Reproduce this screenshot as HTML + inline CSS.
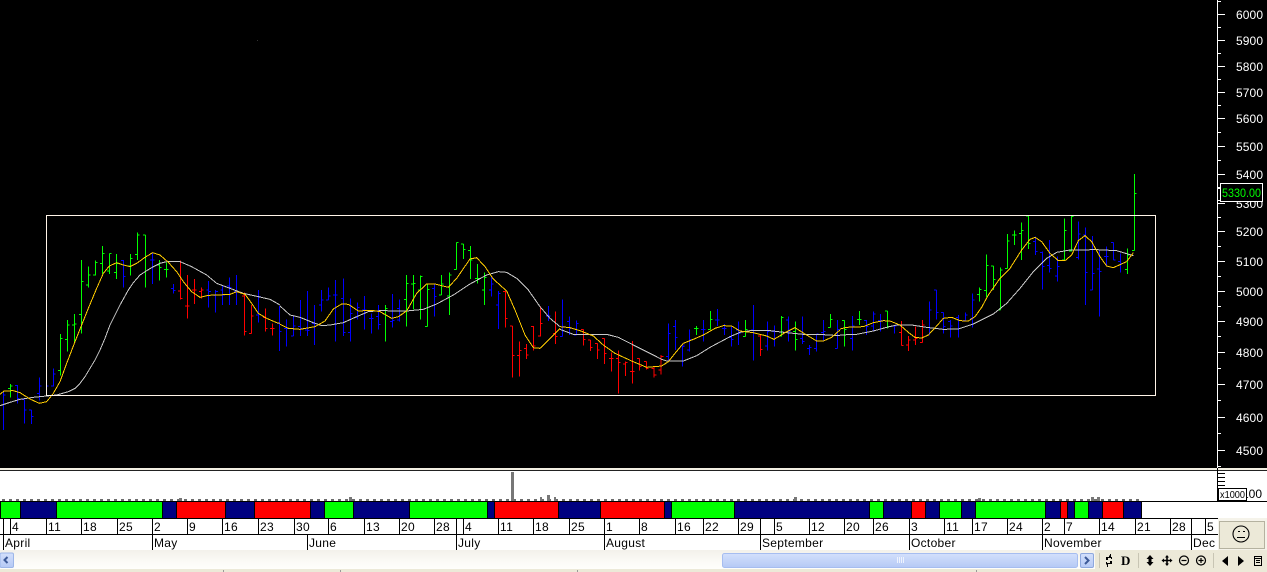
<!DOCTYPE html>
<html>
<head>
<meta charset="utf-8">
<style>
html,body{margin:0;padding:0;background:#000;width:1267px;height:572px;overflow:hidden}
svg{display:block;position:absolute;left:0;top:0}
.ax{font:12px "Liberation Sans",sans-serif;fill:#fff;letter-spacing:.1px}
.d{font:12px "Liberation Sans",sans-serif;fill:#000;letter-spacing:.3px}
</style>
</head>
<body>
<svg width="1267" height="572" viewBox="0 0 1267 572" xmlns="http://www.w3.org/2000/svg">
<defs>
<linearGradient id="tr" x1="0" y1="0" x2="0" y2="1"><stop offset="0" stop-color="#f3f1ea"/><stop offset=".6" stop-color="#fbfaf6"/><stop offset="1" stop-color="#fefefb"/></linearGradient>
<linearGradient id="th" x1="0" y1="0" x2="0" y2="1"><stop offset="0" stop-color="#d3e0fc"/><stop offset="1" stop-color="#b5c9f5"/></linearGradient>
</defs>
<rect width="1267" height="572" fill="#000"/>
<rect x="257" y="40" width="1" height="1" fill="#333"/>

<!-- bars -->
<g fill="none" stroke-width="3" shape-rendering="crispEdges">
<g transform="translate(0,210) scale(.33333)">
<path stroke="#00f" d="M10 545V660M10 585h-7M10 555h7M52 525V580M52 527h-7M52 565h7M73 568V640M73 568h-7M73 600h7M94 600V642M94 600h-7M94 620h7M118 502V572M118 550h-7M118 528h7M139 528V560M139 528h7M160 475V530M160 528h-7M160 492h7M370 150V233M370 152h-7M370 200h7M457 128V222M457 150h-7M457 150h7M520 222V250M520 235h-7M520 242h7M626 213V293M626 240h-7M626 245h7M647 240V308M647 257h-7M647 245h7M668 225V285M668 240h-7M668 255h7M688 202V285M688 228h-7M688 232h7M709 195V285M709 245h-7M709 245h7M775 240V338M775 315h-7M775 260h7M838 288V423M838 340h-7M838 365h7"/>
<path stroke="#0f0" d="M31 522V563M31 535h-7M31 528h7M181 372V497M181 482h-7M181 385h7M202 330V425M202 388h-7M202 345h7M223 312V398M223 345h-7M223 342h7M244 150V370M244 313h-7M244 215h7M265 170V232M265 225h-7M265 195h7M286 152V197M286 195h-7M286 157h7M307 108V192M307 160h-7M307 130h7M328 130V192M328 183h-7M328 130h7M349 132V207M349 187h-7M349 160h7M391 132V197M391 168h-7M391 145h7M412 68V150M412 133h-7M412 75h7M436 75V233M436 75h-7M478 150V212M478 165h-7M478 172h7M499 158V202M499 178h-7M499 178h7"/>
<path stroke="#f00" d="M541 152V268M541 243h-7M541 265h7M562 195V326M562 288h-7M562 288h7M583 207V282M583 240h-7M583 240h7M604 232V265M604 245h-7M604 240h7M733 247V377M733 258h-7M733 365h7M754 285V370M754 370h-7M754 318h7M796 295V365M796 322h-7M796 355h7M817 340V377M817 355h-7M817 355h7"/>
</g>
<g transform="translate(280,210) scale(.33333)">
<path stroke="#00f" d="M19 328V410M19 355h-7M19 355h7M40 318V378M40 378h-7M40 348h7M61 270V378M61 350h-7M61 355h7M82 243V378M82 360h-7M82 362h7M103 285V405M103 340h-7M103 340h7M124 240V305M124 285h-7M124 270h7M145 232V270M145 270h-7M145 258h7M166 210V395M166 255h-7M166 255h7M190 205V378M190 265h-7M190 368h7M211 265V395M211 368h-7M211 310h7M232 278V328M232 322h-7M232 292h7M253 258V358M253 300h-7M253 300h7M274 310V370M274 325h-7M274 325h7M295 285V358M295 320h-7M295 343h7M337 252V352M337 335h-7M337 332h7M358 268V335M358 295h-7M358 330h-7M463 220V320M463 235h-7M463 260h7M634 200V260M634 240h-7M634 222h7M655 243V357M655 285h-7M655 250h7M805 288V333M805 318h-7M805 318h7"/>
<path stroke="#0f0" d="M316 285V395M316 312h-7M316 295h7M379 195V350M379 268h-7M379 220h7M400 195V298M400 222h-7M400 220h7M421 197V328M421 240h-7M421 200h7M442 222V350M442 350h-7M442 238h7M484 195V255M484 255h-7M484 222h7M508 187V315M508 258h-7M508 195h7M529 97V178M529 178h-7M529 98h7M550 102V147M550 102h-7M550 118h7M571 108V207M571 122h-7M571 150h7M592 162V220M592 205h-7M592 205h7M613 187V285M613 240h-7M613 202h7"/>
<path stroke="#f00" d="M676 243V353M676 245h-7M676 325h7M697 348V503M697 348h-7M697 436h7M718 395V500M718 436h-7M718 422h7M739 402V447M739 415h-7M739 435h7M760 348V422M760 350h-7M760 408h7M781 290V380M781 378h-7M781 340h7M826 305V402M826 370h-7M826 380h7"/>
</g>
<g transform="translate(560,260) scale(.33333)">
<path stroke="#00f" d="M7 118V230M7 230h-7M7 200h7M28 170V225M28 185h-7M28 205h7M49 182V225M49 225h-7M49 190h7M325 190V305M325 290h-7M325 220h7M346 180V270M346 200h-7M346 232h7M367 258V320M367 260h7M367 255h7M388 208V275M388 270h-7M388 238h7M430 180V245M430 208h-7M430 208h7M472 147V198M472 180h-7M472 180h7M493 192V225M493 205h-7M493 205h7M514 200V260M514 232h-7M514 238h7M535 185V255M535 210h-7M535 220h7M580 135V302M580 210h-7M580 212h7M622 185V272M622 258h-7M622 215h7M643 197V260M643 215h-7M643 215h7M685 170V245M685 180h-7M685 215h7M727 170V252M727 235h-7M727 245h7M748 255V285M748 265h-7M748 262h7M769 222V275M769 265h-7M769 222h7M790 180V243M790 218h-7M790 215h7M832 180V265M832 265h-7M832 208h7"/>
<path stroke="#0f0" d="M409 198V225M409 205h-7M409 205h7M451 153V208M451 208h-7M451 178h7M556 180V230M556 230h-7M556 208h7M664 168V230M664 228h-7M664 172h7M706 185V272M706 215h-7M706 238h7M811 162V203M811 203h-7M811 178h7"/>
<path stroke="#f00" d="M70 208V257M70 208h-7M70 238h7M91 240V273M91 240h-7M91 262h7M112 250V297M112 250h-7M112 270h7M133 235V312M133 235h-7M133 280h7M154 278V335M154 295h-7M154 295h7M175 272V400M175 295h-7M175 308h7M196 305V348M196 312h-7M196 308h7M217 243V370M217 335h-7M217 335h7M238 295V332M238 295h-7M238 320h7M259 304V328M259 304h-7M259 325h7M282 318V353M282 325h-7M282 345h7M303 285V343M303 330h-7M303 290h7M601 225V288M601 228h-7M601 268h7"/>
</g>
<g transform="translate(840,200) scale(.33333)">
<path stroke="#00f" d="M37 348V452M37 415h-7M37 378h7M79 360V405M79 362h-7M79 380h7M100 335V395M100 378h-7M100 342h7M121 342V395M121 362h-7M121 362h7M163 375V400M163 378h-7M163 378h7M268 305V405M268 405h-7M268 330h7M289 270V358M289 270h-7M289 338h7M310 337V400M310 338h-7M310 380h7M331 360V412M331 365h-7M331 378h7M355 345V412M355 352h-7M355 385h7M376 337V365M376 362h-7M376 345h7M397 280V383M397 355h-7M397 300h7M586 110V165M586 125h-7M586 155h7M607 155V268M607 157h-7M607 200h7M628 120V218M628 197h-7M628 205h7M652 170V245M652 228h-7M652 200h7M715 65V178M715 172h-7M715 102h7M736 82V315M736 105h-7M736 217h7M757 108V270M757 270h-7M757 220h7M778 150V350M778 207h-7M778 215h7M799 140V198M799 170h-7M799 170h7M820 127V180M820 127h-7M820 180h7M841 160V218M841 185h-7M841 190h7"/>
<path stroke="#0f0" d="M13 362V440M13 362h-7M13 388h7M58 333V375M58 358h-7M58 358h7M142 333V385M142 333h-7M142 380h7M418 262V305M418 283h-7M418 268h7M439 163V292M439 272h-7M439 197h7M460 198V270M460 198h-7M460 238h7M481 202V330M481 330h-7M481 210h7M502 102V205M502 205h-7M502 123h7M523 92V135M523 105h-7M523 105h7M544 67V180M544 100h-7M544 92h7M565 48V147M565 48h-7M565 130h7M673 55V180M673 180h-7M673 92h7M694 48V155M694 153h-7M694 50h7M862 145V222M862 208h-7M862 165h7"/>
<path stroke="#f00" d="M184 363V437M184 397h-7M184 437h7M205 408V453M205 435h-7M205 420h7M226 380V435M226 420h-7M226 415h7M247 360V428M247 428h-7M247 375h7"/>
</g>
<g transform="translate(1100,160) scale(.33333)">
<path stroke="#0f0" d="M103 42V272M103 272h-7M103 100h7"/>
</g>
</g>

<!-- moving averages -->
<g fill="none" stroke-width="3" stroke-linejoin="round" shape-rendering="crispEdges">
<g transform="translate(0,210) scale(.33333)">
<polyline stroke="#c8c8c8" points="0,587 30,577 60,568 100,562 140,558 170,555 205,545 225,535 240,520 255,500 270,475 285,450 300,420 315,385 330,345 345,315 360,285 385,240 400,218 420,195 440,182 460,170 480,160 500,155 540,155 575,170 620,195 650,220 690,235 730,250 775,260 810,268 840,285"/>
<polyline stroke="#ffcc00" points="0,553 12,543 40,542 60,548 90,567 118,580 140,575 160,550 180,515 200,460 225,395 245,345 265,295 290,235 310,190 328,168 350,158 370,165 390,170 410,160 435,142 458,128 480,135 505,157 530,185 550,215 575,245 600,262 625,256 655,255 690,253 710,245 735,253 755,280 775,310 800,325 830,338 840,340"/>
</g>
<g transform="translate(280,210) scale(.33333)">
<polyline stroke="#c8c8c8" points="0,288 30,315 60,322 100,338 125,347 150,345 190,338 230,320 265,305 300,302 380,303 430,298 470,282 520,255 570,222 620,195 655,185 680,187 710,205 745,240 780,290 810,325 840,350"/>
<polyline stroke="#ffcc00" points="0,343 25,355 60,358 105,350 135,333 160,297 185,282 205,283 235,303 275,301 300,305 335,325 355,320 380,303 410,250 440,222 465,222 505,232 530,205 570,147 590,143 615,170 640,207 680,243 705,300 735,375 760,413 780,415 805,390 825,370 840,355"/>
</g>
<g transform="translate(560,260) scale(.33333)">
<polyline stroke="#c8c8c8" points="0,208 40,223 140,223 175,232 220,255 270,280 305,298 320,303 370,303 410,287 450,262 510,230 540,217 570,212 630,212 680,218 730,223 790,224 840,227"/>
<polyline stroke="#ffcc00" points="0,200 30,203 60,212 100,228 130,255 165,280 215,303 260,322 305,318 325,305 345,280 370,250 400,238 430,225 465,205 490,197 515,198 540,213 580,218 620,228 642,238 675,218 705,203 735,222 770,243 790,243 815,232 840,210"/>
</g>
<g transform="translate(840,200) scale(.33333)">
<polyline stroke="#c8c8c8" points="0,405 50,403 100,393 140,382 170,375 215,375 260,382 310,388 355,387 400,372 460,342 500,310 540,265 580,215 620,175 650,157 690,150 770,149 830,152 880,167"/>
<polyline stroke="#ffcc00" points="0,387 20,382 70,380 100,368 130,362 150,363 180,375 205,397 225,412 245,414 265,405 290,378 310,355 335,352 360,362 385,363 405,350 425,322 445,285 480,235 510,205 545,150 570,118 585,112 605,125 630,160 655,182 675,182 695,165 715,122 735,107 755,125 780,170 800,198 820,203 860,185 880,158"/>
</g>
</g>

<!-- pattern box -->
<rect x="46.5" y="215.5" width="1109" height="180" fill="none" stroke="#fff4e8" stroke-width="1" shape-rendering="crispEdges"/>

<!-- price axis -->
<g shape-rendering="crispEdges" stroke="#fff" fill="none">
<path d="M1217.5 0V468"/>
<path d="M1217 14.5h8M1217 40.5h8M1217 66.5h8M1217 92.5h8M1217 118.5h8M1217 146.5h8M1217 174.5h8M1217 203.5h8M1217 231.5h8M1217 261.5h8M1217 291.5h8M1217 321.5h8M1217 352.5h8M1217 384.5h8M1217 417.5h8M1217 450.5h8"/>
<path d="M1217 1.5h4M1217 27.5h4M1217 53.5h4M1217 79.5h4M1217 105.5h4M1217 132.5h4M1217 160.5h4M1217 188.5h4M1217 217.5h4M1217 246.5h4M1217 276.5h4M1217 306.5h4M1217 336.5h4M1217 368.5h4M1217 400.5h4M1217 433.5h4M1217 466.5h4"/>
</g>
<g class="ax">
<text x="1236" y="19">6000</text><text x="1236" y="45">5900</text><text x="1236" y="71">5800</text><text x="1236" y="97">5700</text><text x="1236" y="123">5600</text><text x="1236" y="151">5500</text><text x="1236" y="179">5400</text><text x="1236" y="208">5300</text><text x="1236" y="236">5200</text><text x="1236" y="266">5100</text><text x="1236" y="296">5000</text><text x="1236" y="326">4900</text><text x="1236" y="357">4800</text><text x="1236" y="389">4700</text><text x="1236" y="422">4600</text><text x="1236" y="455">4500</text>
</g>
<rect x="1220.5" y="183.5" width="42" height="18" fill="#000" stroke="#fff" shape-rendering="crispEdges"/>
<text x="1222" y="197" textLength="39" lengthAdjust="spacingAndGlyphs" style="font:12px 'Liberation Sans',sans-serif;fill:#0f0">5330.00</text>
<path d="M1217 187.5h3M1217 200.5h3" stroke="#fff" shape-rendering="crispEdges"/>

<!-- lower panels -->
<rect x="0" y="468" width="1267" height="3" fill="#f2efe2"/>
<rect x="0" y="470" width="1267" height="1" fill="#222"/>
<rect x="0" y="471" width="1267" height="30" fill="#fff"/>
<g shape-rendering="crispEdges">
<path d="M2 500h1139" stroke="#6e6e6e" stroke-width="2" stroke-dasharray="3 4"/>
<g fill="#777"><rect x="511" y="472" width="3" height="29"/><rect x="547" y="495" width="3" height="6"/><rect x="540" y="497" width="2" height="4"/><rect x="554" y="497" width="2" height="4"/><rect x="179" y="498" width="3" height="3"/><rect x="349" y="497" width="3" height="4"/><rect x="794" y="497" width="3" height="4"/><rect x="978" y="498" width="3" height="3"/><rect x="1091" y="497" width="3" height="4"/><rect x="1097" y="497" width="3" height="4"/></g>
<path d="M1217.5 468V501M1217 473.5h8M1217 477.5h8M1217 481.5h8M1217 485.5h8" stroke="#000" fill="none"/>
</g>
<text x="1242" y="498" style="font:12px 'Liberation Sans',sans-serif;fill:#000">100</text>
<rect x="1218.5" y="488.5" width="28" height="12" fill="#fff" stroke="#000" shape-rendering="crispEdges"/>
<text x="1220" y="498" textLength="25" lengthAdjust="spacingAndGlyphs" style="font:10.5px 'Liberation Sans',sans-serif;fill:#000">x1000</text>

<rect x="0" y="501" width="1267" height="1" fill="#000"/>
<rect x="0" y="502" width="1267" height="16" fill="#fff"/>
<g shape-rendering="crispEdges">
<rect x="0" y="502" width="1142" height="16" fill="#000"/>
<rect x="1" y="502" width="19" height="16" fill="#0f0"/><rect x="21" y="502" width="35" height="16" fill="#000080"/><rect x="57" y="502" width="105" height="16" fill="#0f0"/><rect x="163" y="502" width="13" height="16" fill="#000080"/><rect x="177" y="502" width="48" height="16" fill="#f00"/><rect x="226" y="502" width="28" height="16" fill="#000080"/><rect x="255" y="502" width="55" height="16" fill="#f00"/><rect x="311" y="502" width="13" height="16" fill="#000080"/><rect x="325" y="502" width="28" height="16" fill="#0f0"/><rect x="354" y="502" width="55" height="16" fill="#000080"/><rect x="410" y="502" width="77" height="16" fill="#0f0"/><rect x="488" y="502" width="6" height="16" fill="#000080"/><rect x="495" y="502" width="63" height="16" fill="#f00"/><rect x="559" y="502" width="41" height="16" fill="#000080"/><rect x="601" y="502" width="63" height="16" fill="#f00"/><rect x="665" y="502" width="6" height="16" fill="#000080"/><rect x="672" y="502" width="62" height="16" fill="#0f0"/><rect x="735" y="502" width="134" height="16" fill="#000080"/><rect x="870" y="502" width="13" height="16" fill="#0f0"/><rect x="884" y="502" width="27" height="16" fill="#000080"/><rect x="912" y="502" width="13" height="16" fill="#f00"/><rect x="926" y="502" width="13" height="16" fill="#000080"/><rect x="940" y="502" width="21" height="16" fill="#0f0"/><rect x="962" y="502" width="13" height="16" fill="#000080"/><rect x="976" y="502" width="69" height="16" fill="#0f0"/><rect x="1046" y="502" width="14" height="16" fill="#000080"/><rect x="1061" y="502" width="6" height="16" fill="#f00"/><rect x="1068" y="502" width="6" height="16" fill="#000080"/><rect x="1075" y="502" width="13" height="16" fill="#0f0"/><rect x="1089" y="502" width="13" height="16" fill="#000080"/><rect x="1103" y="502" width="20" height="16" fill="#f00"/><rect x="1124" y="502" width="17" height="16" fill="#000080"/>
</g>

<!-- time scale -->
<rect x="0" y="518" width="1218" height="32" fill="#fff"/>
<rect x="0" y="518" width="1218" height="1" fill="#000"/>
<rect x="0" y="534" width="1218" height="1" fill="#000"/>
<path shape-rendering="crispEdges" stroke="#000" fill="none" d="M3.5 519v15M10.5 519v15M46.5 519v15M81.5 519v15M117.5 519v15M152.5 519v15M187.5 519v15M222.5 519v15M258.5 519v15M294.5 519v15M328.5 519v15M364.5 519v15M399.5 519v15M434.5 519v15M456.5 519v15M463.5 519v15M498.5 519v15M533.5 519v15M569.5 519v15M604.5 519v15M639.5 519v15M675.5 519v15M703.5 519v15M738.5 519v15M760.5 519v15M774.5 519v15M809.5 519v15M844.5 519v15M873.5 519v15M909.5 519v15M944.5 519v15M972.5 519v15M1007.5 519v15M1042.5 519v15M1064.5 519v15M1099.5 519v15M1135.5 519v15M1170.5 519v15M1191.5 519v15M1205.5 519v15M3.5 535v15M152.5 535v15M307.5 535v15M456.5 535v15M604.5 535v15M760.5 535v15M909.5 535v15M1042.5 535v15M1191.5 535v15"/>
<g class="d">
<text x="12" y="531">4</text><text x="48" y="531">11</text><text x="83" y="531">18</text><text x="119" y="531">25</text><text x="154" y="531">2</text><text x="189" y="531">9</text><text x="224" y="531">16</text><text x="260" y="531">23</text><text x="296" y="531">30</text><text x="330" y="531">6</text><text x="366" y="531">13</text><text x="401" y="531">20</text><text x="436" y="531">28</text><text x="465" y="531">4</text><text x="500" y="531">11</text><text x="535" y="531">18</text><text x="571" y="531">25</text><text x="606" y="531">1</text><text x="641" y="531">8</text><text x="677" y="531">16</text><text x="705" y="531">22</text><text x="740" y="531">29</text><text x="776" y="531">5</text><text x="811" y="531">12</text><text x="846" y="531">20</text><text x="875" y="531">26</text><text x="911" y="531">3</text><text x="946" y="531">11</text><text x="974" y="531">17</text><text x="1009" y="531">24</text><text x="1044" y="531">2</text><text x="1066" y="531">7</text><text x="1101" y="531">14</text><text x="1137" y="531">21</text><text x="1172" y="531">28</text><text x="1207" y="531">5</text>
<text x="5" y="547">April</text><text x="154" y="547">May</text><text x="309" y="547">June</text><text x="458" y="547">July</text><text x="606" y="547">August</text><text x="762" y="547">September</text><text x="911" y="547">October</text><text x="1044" y="547">November</text><text x="1193" y="547">Dec</text>
</g>

<!-- face widget -->
<rect x="1218" y="518" width="49" height="32" fill="#f5f3ea"/>
<rect x="1219.5" y="521.5" width="45" height="27" fill="#ece9d8" stroke="#b5b2a0"/>
<circle cx="1241" cy="534" r="8" fill="none" stroke="#000" stroke-width="1.1"/>
<path d="M1238 531.5h2M1243 531.5h2M1237 537.5h8" stroke="#000" shape-rendering="crispEdges"/>

<!-- scrollbar + toolbar -->
<rect x="0" y="550" width="1267" height="22" fill="#ece9d8"/>
<rect x="0" y="550" width="1095" height="19" fill="url(#tr)"/>
<rect x="0" y="569" width="1095" height="3" fill="#ece9d8"/>
<path d="M223.5 570v2M340.5 570v2M577.5 570v2M976.5 570v2" stroke="#999" shape-rendering="crispEdges"/>
<rect x="0" y="553" width="13.5" height="14.5" rx="1.5" fill="url(#th)" stroke="#9db6e8" stroke-width="1"/>
<path d="M7.5 557l-3 3 3 3" fill="none" stroke="#3d5a98" stroke-width="2"/>
<rect x="722.5" y="553.5" width="355" height="14" rx="2" fill="url(#th)" stroke="#a6bdf0"/>
<path d="M897.5 557v6M899.5 557v6M901.5 557v6M903.5 557v6" stroke="#eef3fe" shape-rendering="crispEdges"/>
<rect x="1080.5" y="553.5" width="13" height="14" rx="1.5" fill="url(#th)" stroke="#8ea8de"/>
<path d="M1085 557l3.5 3.5-3.5 3.5" fill="none" stroke="#3d5a98" stroke-width="2"/>

<path d="M1099.5 553v15M1138.5 553v15M1213.5 553v15" stroke="#c8c5b4" shape-rendering="crispEdges"/>
<g fill="#000" stroke="none">
<path d="M1106 557h6v2h-1v-1h-3v2h-2zM1112 564h-6v-2h1v1h3v-2h2z"/>
<path d="M1110 554h1v3h-1zM1107 564h1v3h-1zM1109 555l2 2-2 1zM1108 566l-2-2 2-1z"/>
<text x="1121" y="565" style="font:bold 13px 'Liberation Serif',serif;fill:#000">D</text>
<path d="M1150 555l3.5 4h-2v3h2l-3.5 4-3.5-4h2v-3h-2z"/>
<path d="M1167 555l2 2.5h-1.2v2.2h2.2v-1.2l2.5 2-2.5 2v-1.2h-2.2v2.2h1.2l-2 2.5-2-2.5h1.2v-2.2h-2.2v1.2l-2.5-2 2.5-2v1.2h2.2v-2.2h-1.2z"/>
<path d="M1228 556v10l-6-5zM1238 556v10l6-5z"/>
</g>
<g fill="none" stroke="#000" shape-rendering="auto">
<circle cx="1184" cy="560.5" r="4.5" stroke-width="1.2"/>
<path d="M1181.5 560.5h5" stroke-width="1.2"/>
<circle cx="1201" cy="560.5" r="4.5" stroke-width="1.2"/>
<path d="M1198.5 560.5h5M1201 558v5" stroke-width="1.2"/>
<rect x="1254.5" y="556.5" width="7" height="9" stroke-width="1"/>
<path d="M1255 558.5h6M1256 560.5h4M1256 562.5h4" stroke-width="1"/>
</g>
</svg>
</body>
</html>
